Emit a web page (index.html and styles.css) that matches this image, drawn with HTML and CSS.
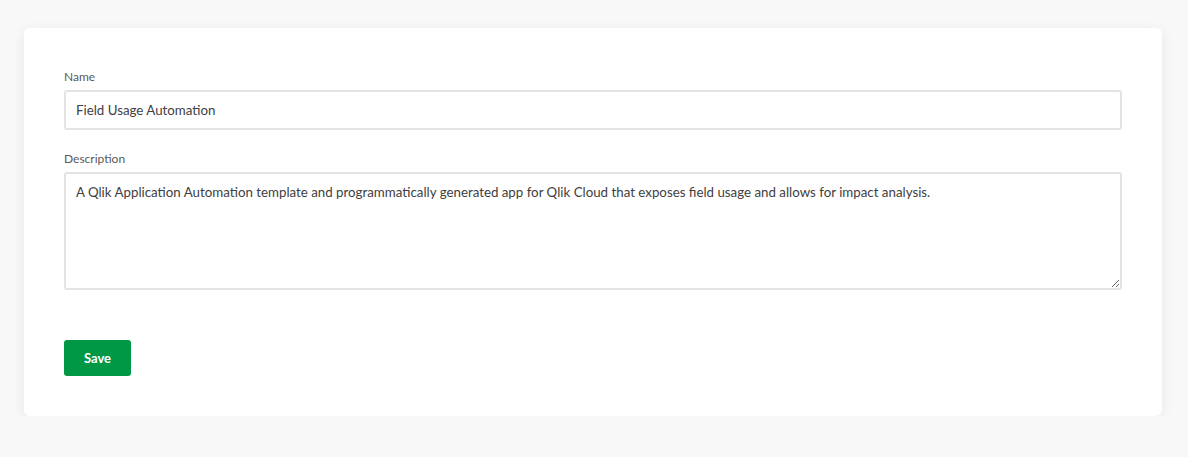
FILE: index.html
```html
<!DOCTYPE html>
<html lang="en">
<head>
<meta charset="utf-8">
<title>Edit</title>
<link rel="stylesheet" href="styles.css">
</head>
<body>
<main class="card">
  <form class="form">
    <div class="field">
      <label class="label" for="name">Name</label>
      <input class="input" id="name" type="text" value="Field Usage Automation">
    </div>
    <div class="field">
      <label class="label" for="desc">Description</label>
      <textarea class="textarea" id="desc">A Qlik Application Automation template and programmatically generated app for Qlik Cloud that exposes field usage and allows for impact analysis.</textarea>
    </div>
    <div class="actions">
      <button class="btn" type="button">Save</button>
    </div>
  </form>
</main>
</body>
</html>
```

FILE: styles.css
```css
html, body {
  margin: 0;
  padding: 0;
  background: #f8f8f8;
}
body {
  font-family: "Lato", "Liberation Sans", sans-serif;
  color: #404040;
  padding: 28px 26px 0 24px;
}
.card {
  background: #ffffff;
  border-radius: 6px;
  box-shadow: 0 3px 14px rgba(0, 0, 0, 0.07);
  padding: 40px 40px 39px;
  box-sizing: border-box;
  height: 388px;
}
.form {
  display: flex;
  flex-direction: column;
}
.field {
  display: flex;
  flex-direction: column;
  gap: 5px;
  margin-bottom: 20px;
}
.label {
  font-size: 12px;
  line-height: 17px;
  color: #595959;
}
.input, .textarea {
  font-family: inherit;
  font-size: 13.3px;
  color: #404040;
  border: 2px solid #e3e3e3;
  border-radius: 3px;
  padding: 0 10px;
  box-sizing: border-box;
  width: 100%;
  outline: none;
  background: #fff;
}
.input {
  height: 40px;
}
.textarea {
  height: 118px;
  padding-top: 9px;
  line-height: 18px;
  resize: vertical;
}
.actions {
  margin-top: 30px;
}
.btn {
  background: #009845;
  color: #fff;
  border: none;
  border-radius: 3px;
  font-family: inherit;
  font-weight: 700;
  font-size: 13px;
  height: 36px;
  width: 67px;
  cursor: pointer;
}
```
